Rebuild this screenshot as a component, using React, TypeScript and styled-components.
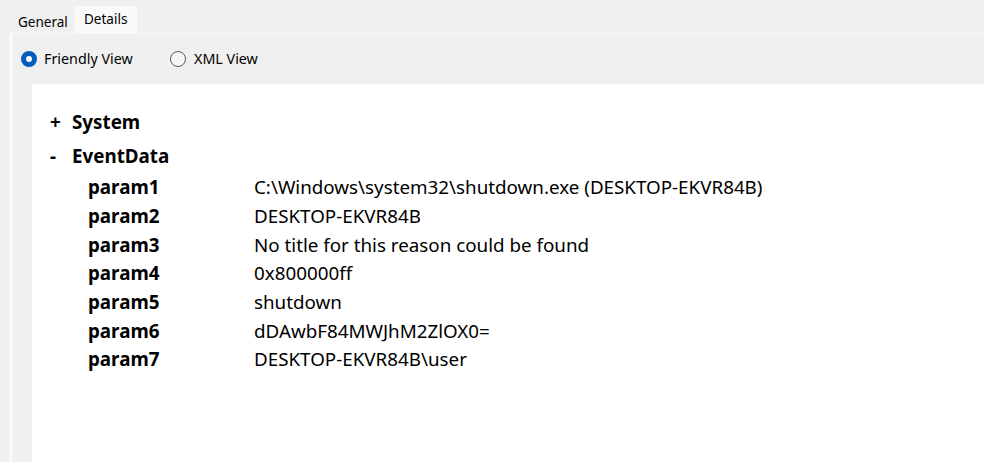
import React from "react";
import styled, { createGlobalStyle } from "styled-components";

const Global = createGlobalStyle`
  html, body { margin: 0; padding: 0; }
  body {
    background: #f0f0f0;
    font-family: "Segoe UI", "Noto Sans", "Open Sans", sans-serif;
    color: #000;
    width: 984px;
    height: 462px;
    overflow: hidden;
  }
`;

const Window = styled.div`
  display: flex;
  flex-direction: column;
  width: 984px;
  height: 462px;
  background: #f0f0f0;
`;

const TabStrip = styled.div`
  display: flex;
  align-items: flex-end;
  height: 33px;
  padding-left: 5px;
`;

const Tab = styled.div<{ $active?: boolean }>`
  display: flex;
  align-items: center;
  justify-content: flex-start;
  box-sizing: border-box;
  font-size: 13.5px;
  height: ${(p) => (p.$active ? "28px" : "23px")};
  width: ${(p) => (p.$active ? "63px" : "69px")};
  padding: ${(p) => (p.$active ? "0 0 3px 10px" : "0 0 0 13px")};
  background: ${(p) => (p.$active ? "#f9f9f9" : "#f0f0f0")};
  margin-bottom: ${(p) => (p.$active ? "-1px" : "0")};
  position: relative;
  z-index: ${(p) => (p.$active ? 1 : 0)};
`;

const Panel = styled.div`
  flex: 1;
  display: flex;
  flex-direction: column;
  margin-left: 9px;
  border-top: 1px solid #f9f9f9;
  border-left: 4px solid #f9f9f9;
  min-height: 0;
`;

const RadioRow = styled.div`
  display: flex;
  align-items: center;
  height: 49px;
  padding-bottom: 1px;
  padding-left: 8px;
`;

const RadioLabel = styled.label`
  display: flex;
  align-items: center;
  font-size: 14.3px;
  gap: 7px;
  &:first-child {
    width: 149px;
  }
  &:last-child {
    gap: 8px;
  }
`;

const RadioDot = styled.span<{ $checked?: boolean }>`
  box-sizing: border-box;
  width: 16px;
  height: 16px;
  border-radius: 50%;
  background: ${(p) => (p.$checked ? "#fff" : "#f6f6f6")};
  border: ${(p) => (p.$checked ? "5px solid #005fb8" : "1px solid #5c5c5c")};
  flex: none;
`;

const Content = styled.div`
  flex: 1;
  margin-left: 19px;
  background: #fff;
  padding: 21px 0 0 18px;
  font-size: 18.8px;
`;

const SectionRow = styled.div`
  display: flex;
  height: 34px;
  align-items: center;
  font-weight: 700;
`;

const Marker = styled.span`
  width: 22px;
  flex: none;
`;

const ParamRow = styled.div`
  display: flex;
  align-items: center;
  height: 28.67px;
  padding-left: 38px;
`;

const ParamKey = styled.span`
  width: 166px;
  flex: none;
  font-weight: 700;
`;

const ParamValue = styled.span`
  white-space: nowrap;
`;

const params: [string, string][] = [
  ["param1", "C:\\Windows\\system32\\shutdown.exe (DESKTOP-EKVR84B)"],
  ["param2", "DESKTOP-EKVR84B"],
  ["param3", "No title for this reason could be found"],
  ["param4", "0x800000ff"],
  ["param5", "shutdown"],
  ["param6", "dDAwbF84MWJhM2ZlOX0="],
  ["param7", "DESKTOP-EKVR84B\\user"],
];

export default function App() {
  return (
    <Window>
      <Global />
      <TabStrip>
        <Tab>General</Tab>
        <Tab $active>Details</Tab>
      </TabStrip>
      <Panel>
        <RadioRow>
          <RadioLabel>
            <RadioDot $checked />
            Friendly View
          </RadioLabel>
          <RadioLabel>
            <RadioDot />
            XML View
          </RadioLabel>
        </RadioRow>
        <Content>
          <SectionRow>
            <Marker>+</Marker>
            System
          </SectionRow>
          <SectionRow>
            <Marker>-</Marker>
            EventData
          </SectionRow>
          {params.map(([k, v]) => (
            <ParamRow key={k}>
              <ParamKey>{k}</ParamKey>
              <ParamValue>{v}</ParamValue>
            </ParamRow>
          ))}
        </Content>
      </Panel>
    </Window>
  );
}
